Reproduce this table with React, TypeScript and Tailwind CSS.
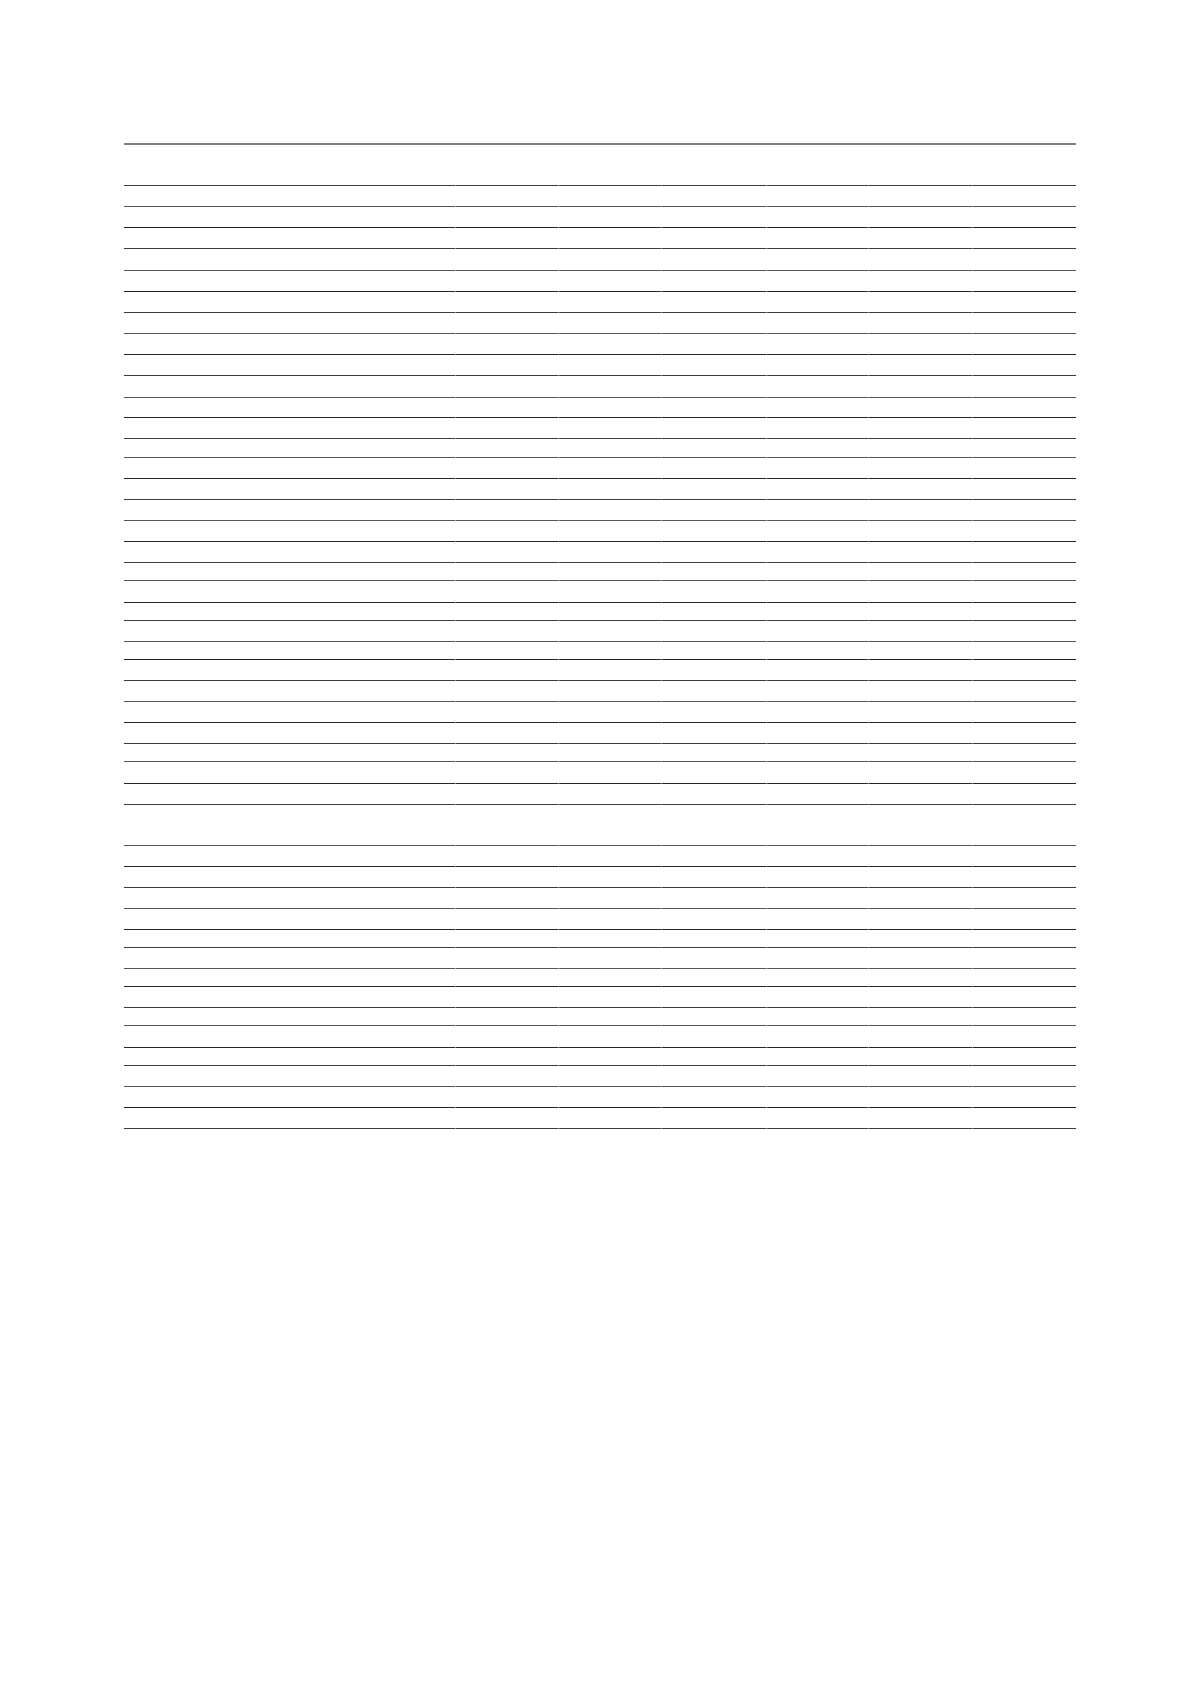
import React from "react";

// y positions of each ruled line, top to bottom
const LINES = [
  144, 185, 206, 227, 248, 270, 291, 312, 333, 354, 375, 397, 417, 438, 457,
  478, 499, 520, 541, 562, 580, 602, 620, 641, 659, 680, 701, 722, 743, 761,
  783, 804, 845, 866, 887, 908, 929, 947, 968, 986, 1007, 1025, 1047, 1065,
  1086, 1107, 1128,
];

const HEIGHT_CLASS: Record<number, string> = {
  18: "h-[18px]",
  19: "h-[19px]",
  20: "h-[20px]",
  21: "h-[21px]",
  22: "h-[22px]",
  41: "h-[41px]",
};

const COLS = ["w-[331px]", "w-[103px]", "w-[103px]", "w-[105px]", "w-[102px]", "w-[104px]", "flex-1"];

const SHADES = ["border-b-[#3c3c3c]", "border-b-[#555555]", "border-b-[#262626]"];

const Row: React.FC<{ h: number; shade: number }> = ({ h, shade }) => (
  <div className={`flex ${HEIGHT_CLASS[h] ?? "h-[21px]"}`}>
    {COLS.map((c, i) => (
      <div
        key={i}
        className={`${c} border-b ${SHADES[shade]} ${i > 0 ? "border-l border-l-white" : ""}`}
      ></div>
    ))}
  </div>
);

const App: React.FC = () => {
  const rows = LINES.slice(1).map((y, i) => y - LINES[i]);

  return (
    <div className="min-h-[1693px] w-full bg-white font-['Liberation_Sans',sans-serif]">
      <div className="pt-[144px] pl-[124px]">
        <div className="w-[952px] border-t-2 border-[#808080] -mt-px">
          {rows.map((h, i) => (
            <Row key={i} h={h} shade={i % 3} />
          ))}
        </div>
      </div>
    </div>
  );
};

export default App;
